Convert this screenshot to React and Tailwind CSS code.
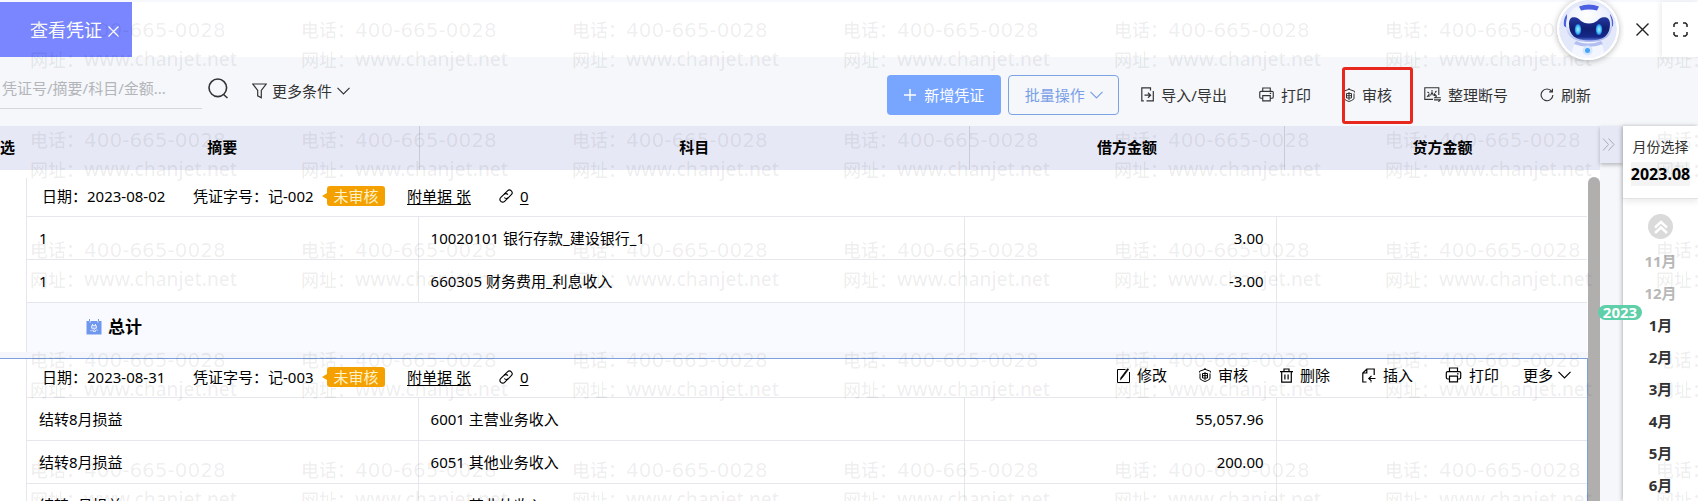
import React from 'react';

const Svg = ({ className = 'size-4', box = '0 0 16 16', children, w = 1.2 }) => (
  <svg className={`shrink-0 ${className}`} viewBox={box} fill="none" stroke="currentColor" strokeWidth={w} aria-hidden="true">
    {children}
  </svg>
);

const ChevronDown = () => (
  <Svg className="h-2 w-[13px]" box="0 0 13 8">
    <path d="M.5 .8 6.5 7 12.500 .8" />
  </Svg>
);

const AuditIcon = () => (
  <Svg className="h-[14px] w-[12px]" box="0 0 12 14" w={1}>
    <path d="M6 0v1.500M.5 4.500V3.300L6 1.300l5.500 2v1.200M1 5.500v5.300q2 1.900 5 2.700 3-.8 5-2.700V5.500M3.500 5.500h5v4.500h-5zM3.500 7.700h5M6 4v8" />
  </Svg>
);

const PrintIcon = ({ className = 'h-[15px] w-[15px]' }) => (
  <Svg className={className} box="0 0 16 16">
    <path d="M4 4.500V1h8v3.500M3.500 12H2.200A1.400 1.400 0 0 1 .8 10.600V6a1.400 1.400 0 0 1 1.400-1.400h11.600A1.400 1.400 0 0 1 15.200 6v4.600a1.400 1.400 0 0 1-1.400 1.400h-1.300M4 9.200h8v5.600H4zM11.500 6.800h1.500" />
  </Svg>
);

const ExportIcon = () => (
  <Svg className="h-[15px] w-[13px]" box="0 0 13 15">
    <path d="M9.500 1.500V.8H.8v13h2M12.300 4v9.800H5.500M9.500 1v2.500M3.500 8.200h6M7 5.700l2.600 2.500L7 10.700" />
  </Svg>
);

const GapIcon = () => (
  <Svg className="h-[15px] w-[17px]" box="0 0 17 15" w={1.1}>
    <path d="M9 12.400H.8V.8h14v7.200M3 10l2-2.500V10M6.500 8.500 8 5.500l1.500 3M10.500 9V7l2 2M3.500 5l1.500 1M8 3v1.500M12.500 4 11 5.500M16.800 10.800h-6l1.800-1.800M10 12.900h6.300l-1.900 1.900" />
  </Svg>
);

const RefreshIcon = () => (
  <Svg className="size-[14px]" box="0 0 15 15">
    <path d="M12.600 3.600A6.300 6.300 0 1 0 13.800 7.500M13.300 .8v3.400H9.800" />
  </Svg>
);

const EditIcon = () => (
  <Svg className="h-[15px] w-[13px]" box="0 0 13 15" w={1}>
    <path d="M8.500 1.500h-8v13h12V4" />
    <path d="M11.700 1.300 5 10.300l-1.600 1.600.4-2.200L10.400.8z" fill="currentColor" strokeWidth=".6" />
  </Svg>
);

const TrashIcon = () => (
  <Svg className="h-[15px] w-[13px]" box="0 0 13 15">
    <path d="M0 3.600h13M4 3.500V1h5v2.500M1.700 3.500v10.700h9.600V3.500M4.900 6.500v5M8.100 6.500v5" />
  </Svg>
);

const InsertIcon = () => (
  <Svg className="h-[15px] w-[14px]" box="0 0 14 15">
    <path d="M4.500 14H.8V5L4.800 1h7.400v6M4.800 1v4h-4M13.500 10.500H7M9.500 7.800 6.800 10.500l2.700 2.700M8.500 14h1" />
  </Svg>
);

const LinkIcon = () => (
  <Svg className="size-[14px]" box="0 0 14 14" w={1.1}>
    <g transform="rotate(-45 7 7)">
      <path d="M7 9.800H2.300a2.700 2.700 0 0 1 0-5.400h4.400a2.700 2.700 0 0 1 2.600 3" />
      <path d="M7 4.400h4.700a2.700 2.700 0 0 1 0 5.400H7.300a2.700 2.700 0 0 1-2.600-3" />
    </g>
  </Svg>
);

const TotalIcon = () => (
  <svg className="size-4" viewBox="0 0 16 16" aria-hidden="true">
    <path d="M.5 2h3v1.500h1V2h7v1.500h1V2h3v13.500H.5z" fill="#6f97ee" />
    <path d="M3.500 0v2.500M12.500 0v2.500" stroke="#6f97ee" />
    <path d="M6.200 5l.8 1.200M9.800 5 9 6.200M5.700 6.700h4.600v2.500H5.700zM5 10.800v1.500M7 10.500v1.800h2.500v-1M8.300 10.300l.5.800M10.800 10.500l.4 1.200" stroke="#fff" strokeWidth=".9" fill="none" />
  </svg>
);

const Robot = () => (
  <svg className="size-[58px]" viewBox="0 0 58 58" role="img" aria-label="助手">
    <defs>
      <radialGradient id="head" cx=".45" cy=".3" r=".75">
        <stop offset="0" stopColor="#fff" />
        <stop offset=".65" stopColor="#eaeefd" />
        <stop offset="1" stopColor="#a3b0ea" />
      </radialGradient>
      <linearGradient id="visor" x1="0" y1="0" x2="0" y2="1">
        <stop offset="0" stopColor="#2438a0" />
        <stop offset=".5" stopColor="#101f72" />
        <stop offset=".85" stopColor="#16298a" />
        <stop offset="1" stopColor="#5b78dc" />
      </linearGradient>
      <radialGradient id="eye">
        <stop offset="0" stopColor="#a5f1ff" />
        <stop offset=".6" stopColor="#4cc4fb" />
        <stop offset="1" stopColor="#1f6fe0" />
      </radialGradient>
    </defs>
    <circle cx="29" cy="29" r="29" fill="#e3e8fb" />
    <path d="M13 58q-1-16 9-17h14q10 1 9 17z" fill="#f4f6ff" />
    <path d="M17 41q12 5 25 0l2 3q-14 6-29 0z" fill="#b3bff0" />
    <path d="M8 14q-4 5-3 12l3 2V14zM51 14q4 5 3 12l-3 2V14z" fill="#4d62dc" />
    <path d="M30 4c14 0 23 8 23 21 0 12-9 17-23 17S7 37 7 25C7 12 16 4 30 4z" fill="url(#head)" />
    <path d="M20 6.500q10-4 20 0l-2 4q-8-2-16 0z" fill="#4a5fe2" />
    <path d="M10 24c0-6 3-7.500 7-6.500 4 1 5 6 13 6s9-5 13-6c4-1 8 .5 8 6.500 0 11-6 16.500-20.500 16.500S10 35 10 24z" fill="url(#visor)" />
    <ellipse cx="19" cy="29.500" rx="3.200" ry="5.500" fill="url(#eye)" />
    <ellipse cx="40" cy="29.500" rx="3.200" ry="5.500" fill="url(#eye)" />
    <circle cx="28.500" cy="50.500" r="5" fill="#d5e6ff" />
    <circle cx="28.500" cy="50.500" r="2.500" fill="#45a4f5" />
  </svg>
);

function Watermark() {
  return (
    <div aria-hidden="true" className="pointer-events-none absolute inset-0 z-10 overflow-hidden">
      <div className="grid w-max grid-cols-[repeat(7,271px)] pt-[15px] pl-[30px] text-lg font-medium whitespace-nowrap text-black/7">
        {Array.from({ length: 35 }, (_, i) => (
          <div key={i} className="h-[110px]">
            <p className="flex h-[30px] items-center">电话：<span className="font-['DejaVu_Sans','Noto_Sans_CJK_SC',sans-serif] text-xl">400-665-0028</span></p>
            <p className="flex h-[30px] items-center">网址：<span className="text-[19px]">www.chanjet.net</span></p>
          </div>
        ))}
      </div>
    </div>
  );
}

const Tool = ({ icon, children, className = '' }) => (
  <button type="button" className={`flex items-center gap-[7px] whitespace-nowrap ${className}`}>
    {icon}
    {children}
  </button>
);

function Toolbar() {
  return (
    <div className="flex h-[69px] items-center bg-[#f5f7fb] pr-[107px] text-[#333]">
      <input
        type="text"
        aria-label="搜索凭证"
        placeholder="凭证号/摘要/科目/金额..."
        className="mb-0.5 h-9 w-[202px] border-b border-[#d5d7dc] bg-transparent pb-1 pl-0.5 placeholder:text-[#b3b5b9] focus:outline-none"
      />
      <button type="button" aria-label="搜索" className="ml-[6px] flex pb-[6px]">
        <Svg className="size-[21px]" box="0 0 21 21" w={1.6}>
          <circle cx="9.800" cy="9.800" r="8.800" />
          <path d="M15.500 16.500 19.500 20" />
        </Svg>
      </button>
      <button type="button" className="ml-[23px] flex items-center gap-[5px] pb-0.5">
        <Svg className="h-4 w-[15px]" box="0 0 15 16">
          <path d="M.8 1h13.400L9.300 7.500v7.300l-3.600-1.900V7.500z" />
        </Svg>
        更多条件
        <ChevronDown />
      </button>
      <div className="ml-auto flex items-center gap-8 pt-[6px]">
        <div className="-mr-[10px] flex gap-[7px]">
          <button type="button" className="flex h-10 w-[114px] items-center justify-center gap-2 rounded bg-[#78a6ff] text-white">
            <Svg className="size-3" box="0 0 12 12" w={1.4}>
              <path d="M6 0v12M0 6h12" />
            </Svg>
            新增凭证
          </button>
          <button type="button" className="flex h-10 w-[111px] items-center justify-center gap-[5px] rounded border border-[#7ba3e3] text-[#7b9fe6]">
            批量操作
            <ChevronDown />
          </button>
        </div>
        <Tool icon={<ExportIcon />}>导入/导出</Tool>
        <Tool icon={<PrintIcon />}>打印</Tool>
        <div className="relative">
          <Tool icon={<AuditIcon />}>审核</Tool>
          <span className="pointer-events-none absolute -top-[18px] -right-[21px] -bottom-[19px] -left-px z-20 rounded-[3px] border-3 border-[#e8281e]" />
        </div>
        <Tool icon={<GapIcon />}>整理断号</Tool>
        <Tool icon={<RefreshIcon />}>刷新</Tool>
      </div>
    </div>
  );
}

function TopBar() {
  return (
    <header className="flex h-[57px] border-t-2 border-[#f7f8fe] bg-white">
      <div className="flex w-[132px] items-center justify-end gap-[6px] bg-[#7986ff] pr-[13px] text-white">
        <a href="#voucher" className="text-[18px]">查看凭证</a>
        <button type="button" aria-label="关闭标签" className="pt-1">
          <Svg className="size-[11px]" box="0 0 11 11">
            <path d="M.5.5l10 10M10.500.5l-10 10" />
          </Svg>
        </button>
      </div>
      <div className="relative z-20 ml-auto flex">
        <button type="button" aria-label="智能助手" className="-mt-1 mr-[5px] size-[62px] overflow-hidden rounded-full border-2 border-white shadow-[0_1px_6px_rgba(0,0,0,0.3)]">
          <Robot />
        </button>
        <div className="flex bg-[#f7f7f9]">
          <button type="button" aria-label="关闭" className="flex w-[38px] items-center justify-center bg-white pr-0.5 text-[#222]">
            <Svg className="size-[13px]" box="0 0 13 13" w={1.4}>
              <path d="M.5.5l12 12M12.500.5l-12 12" />
            </Svg>
          </button>
          <button type="button" aria-label="全屏" className="flex w-9 items-center justify-center bg-white text-[#222] shadow-[-2px_0_5px_rgba(0,0,0,0.08)]">
            <Svg className="size-[15px]" box="0 0 15 15" w={1.5}>
              <path d="M1 5V2.500L2.500 1H5M10 1h2.500L14 2.500V5M14 10v2.500L12.500 14H10M5 14H2.500L1 12.500V10" />
            </Svg>
          </button>
        </div>
      </div>
    </header>
  );
}

const vouchers = [
  {
    date: '2023-08-02',
    no: '记-002',
    rows: [
      ['1', '10020101 银行存款_建设银行_1', '3.00'],
      ['1', '660305 财务费用_利息收入', '-3.00'],
    ],
    total: true,
  },
  {
    date: '2023-08-31',
    no: '记-003',
    active: true,
    rows: [
      ['结转8月损益', '6001 主营业务收入', '55,057.96'],
      ['结转8月损益', '6051 其他业务收入', '200.00'],
      ['结转8月损益', '6301 营业外收入', '900.00'],
    ],
  },
];

function Voucher({ v }) {
  return (
    <section className={v.active ? 'border-t border-r border-[#7ba0dc]' : 'mt-2 mr-px'}>
      <div className="ml-[26px] border-l border-[#e6e7ec]">
        <div className="flex h-[39px] items-center border-b border-[#e6e7ec] pr-4 pb-0.5 pl-[15px] whitespace-nowrap">
          <span className="w-[151px]">日期：{v.date}</span>
          <span className="w-[129px]">凭证字号：{v.no}</span>
          <span className="relative z-20 ml-[5px] flex h-5 w-[58px] items-center justify-center rounded-[3px] bg-[#f4a100] text-[#fff1c9]">
            <span className="absolute top-[7px] -left-[5px] border-y-3 border-r-5 border-y-transparent border-r-[#f4a100]" />
            未审核
          </span>
          <a href="#attachments" className="ml-[22px] underline underline-offset-2">附单据 张</a>
          <a href="#files" className="ml-7 flex items-center gap-[7px]">
            <LinkIcon />
            <span className="underline underline-offset-2">0</span>
          </a>
          {v.active && (
            <div className="ml-auto flex items-center gap-8 pb-1">
              <Tool icon={<EditIcon />}>修改</Tool>
              <Tool icon={<AuditIcon />}>审核</Tool>
              <Tool icon={<TrashIcon />}>删除</Tool>
              <Tool icon={<InsertIcon />}>插入</Tool>
              <Tool icon={<PrintIcon className="h-4 w-[17px]" />}>打印</Tool>
              <button type="button" className="-ml-2 flex items-center gap-[5px]">
                更多
                <ChevronDown />
              </button>
            </div>
          )}
        </div>
        <table className="w-full table-fixed border-separate border-spacing-0">
          <colgroup>
            <col className="w-[25.1%]" />
            <col className="w-[35%]" />
            <col className="w-[20%]" />
            <col className="w-[19.9%]" />
          </colgroup>
          <tbody>
            {v.rows.map(([a, b, c], i) => (
              <tr key={i} className="h-[43px]">
                <td className="border-r border-b border-[#e6e7ec] px-3">{a}</td>
                <td className="border-r border-b border-[#e6e7ec] px-3">{b}</td>
                <td className="border-r border-b border-[#e6e7ec] px-3 text-right">{c}</td>
                <td className="border-b border-[#e6e7ec] px-3" />
              </tr>
            ))}
          </tbody>
          {v.total && (
            <tfoot>
              <tr className="h-[49px] bg-[#f8faff]">
                <th scope="row" colSpan={2} className="border-r border-[#e6e7ec] pb-0.5 pl-[59px]">
                  <span className="flex items-center gap-[6px] text-[17px]">
                    <TotalIcon />
                    总计
                  </span>
                </th>
                <td className="border-r border-[#e6e7ec]" />
                <td />
              </tr>
            </tfoot>
          )}
        </table>
      </div>
    </section>
  );
}

const months = ['11月', '12月', '1月', '2月', '3月', '4月', '5月', '6月'];

function MonthPanel() {
  return (
    <aside className="relative z-0 w-[75px] shrink-0 bg-white text-center shadow-[-1px_0_4px_rgba(0,0,0,0.25)]">
      <div className="flex h-[73px] flex-col items-center border-b border-[#e3e3e3] pt-[10px] text-sm text-[#333] shadow-[0_3px_6px_rgba(0,0,0,0.08)]">
        <span className="h-[26px] leading-[22px]">月份选择</span>
        <button type="button" className="h-6 bg-[#f4f4f5] text-base leading-6 font-bold text-black">2023.08</button>
      </div>
      <button type="button" aria-label="更早月份" className="mx-auto mt-[15px] flex size-[25px] items-center justify-center rounded-full bg-[#dadada] text-white">
        <Svg className="size-4" box="0 0 16 16" w={2.4}>
          <path d="M2 8.500 8 3l6 5.500M2 14l6-5.500 6 5.500" />
        </Svg>
      </button>
      <ul className="pt-[6px] leading-8 font-bold text-[#333]">
        {months.map((m, i) => (
          <li key={m} className="relative h-8">
            <button type="button" className={i < 2 ? 'text-[#b8b8b8]' : ''}>{m}</button>
            {i === 2 && (
              <span className="absolute -top-1 -left-[25px] h-[15px] w-11 rounded-full bg-[#5ecfa8] leading-[15px] text-white">2023</span>
            )}
          </li>
        ))}
      </ul>
    </aside>
  );
}

export default function App() {
  return (
    <div className="relative flex h-screen flex-col overflow-hidden bg-white font-['Noto_Sans','Noto_Sans_CJK_SC',sans-serif] text-[15px] leading-5 text-black">
      <TopBar />
      <Toolbar />
      <div className="flex min-h-0 flex-1">
        <main className="flex min-w-0 flex-1 flex-col">
          <table className="w-full shrink-0 table-fixed border-separate border-spacing-0 bg-[#e6e8f5]">
            <thead>
              <tr className="h-11">
                <th scope="col" className="w-[26px] pb-0.5 text-left whitespace-nowrap">选</th>
                <th scope="col" className="w-[24.6%] border-r border-[#c9cbd6] pb-0.5">摘要</th>
                <th scope="col" className="w-[34.4%] border-r border-[#c9cbd6] pb-0.5">科目</th>
                <th scope="col" className="w-[19.7%] border-r border-[#c9cbd6] pb-0.5">借方金额</th>
                <th scope="col" className="pb-0.5">贷方金额</th>
              </tr>
            </thead>
          </table>
          <div className="flex min-h-0 flex-1">
            <div className="flex min-w-0 flex-1 flex-col overflow-hidden">
              <Voucher v={vouchers[0]} />
              <div className="h-[6px] shrink-0 bg-[#f5f6fb]" />
              <Voucher v={vouchers[1]} />
            </div>
            <div className="mt-[7px] w-3 shrink-0 rounded-t-md bg-[#b0afae]" />
          </div>
        </main>
        <div className="w-[23px] shrink-0 bg-[#f5f7fb]">
          <button type="button" aria-label="收起" className="flex h-[37px] w-full items-center justify-center bg-[#e6e8f5] pr-[6px] text-[#aaacb5] shadow-[0_2px_4px_rgba(0,0,0,0.25)]">
            <Svg className="size-[13px]" box="0 0 13 13" w={1}>
              <path d="M1 .5l5.500 6L1 12.500M6.500.5l5.500 6-5.500 6" />
            </Svg>
          </button>
        </div>
        <MonthPanel />
      </div>
      <Watermark />
    </div>
  );
}
